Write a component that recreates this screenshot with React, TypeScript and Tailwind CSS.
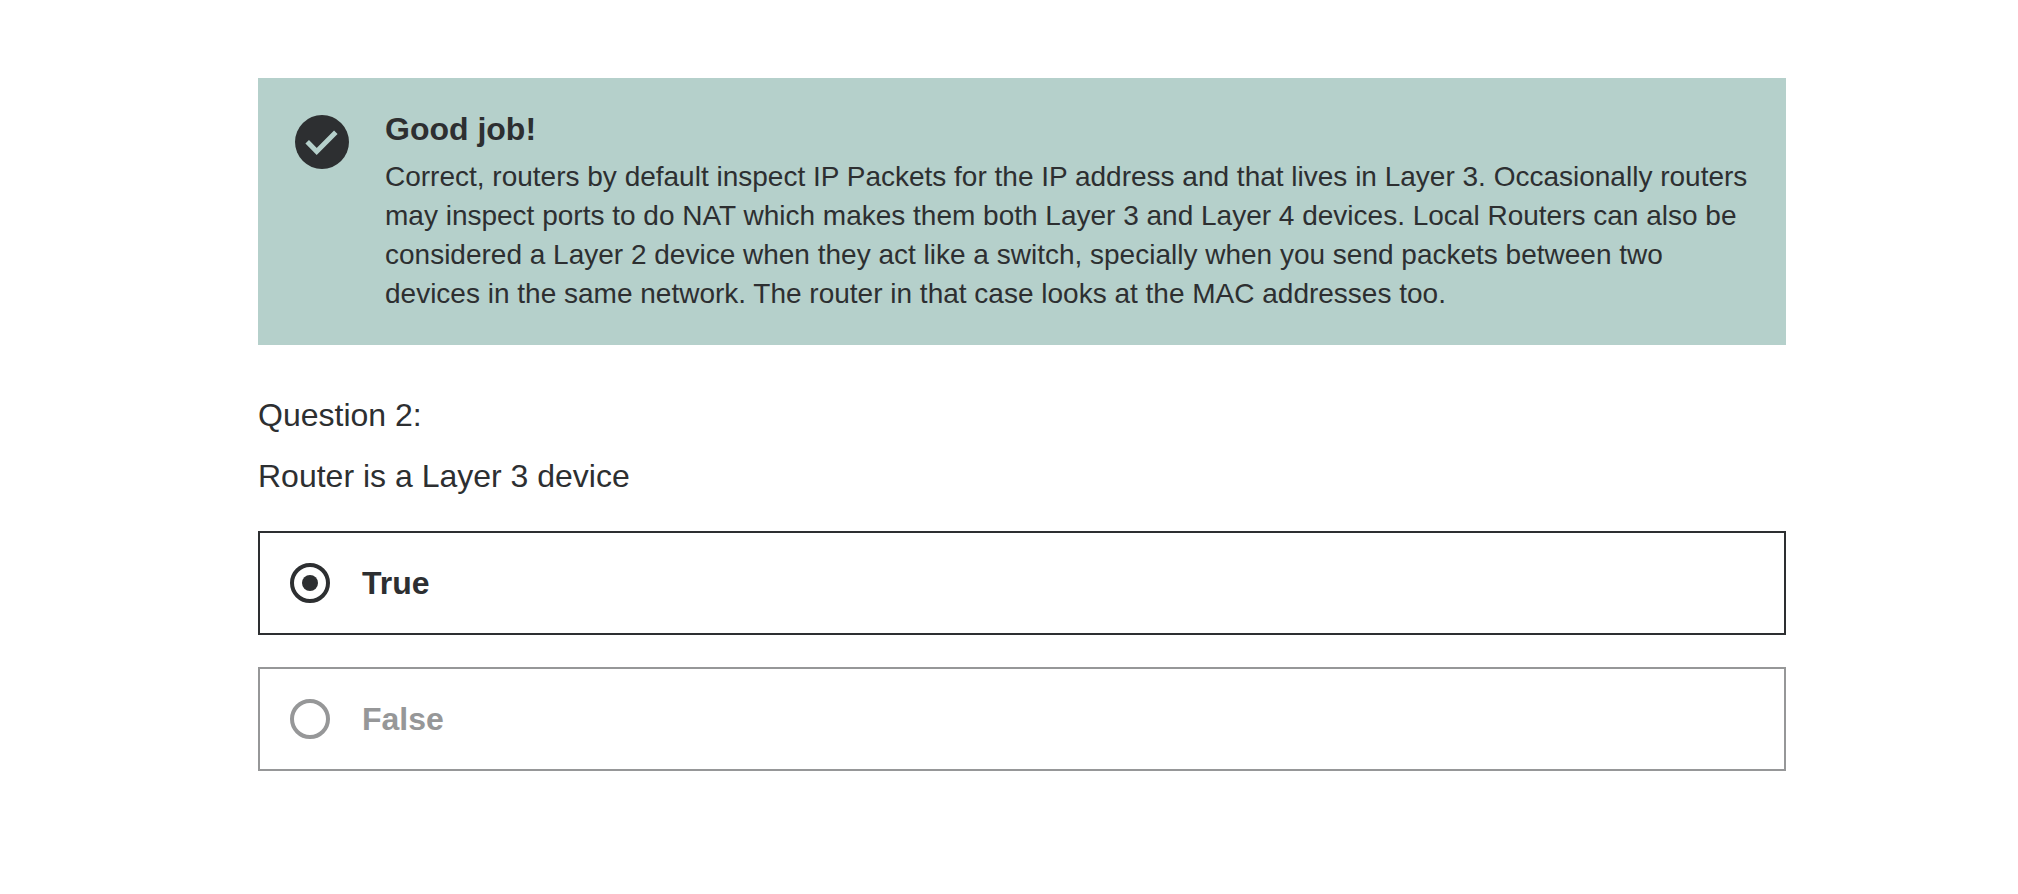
import { useState } from "react";

const OPTIONS = ["True", "False"];

function CheckCircle() {
  return (
    <svg viewBox="0 0 54 54" className="size-[54px] shrink-0" aria-hidden="true">
      <circle cx="27" cy="27" r="27" fill="#2d2f31" />
      <path d="M12.2 26.7 L21.7 36.4 L40.8 17.3" fill="none" stroke="#b5d0cb" strokeWidth="5" />
    </svg>
  );
}

export default function App() {
  const [answer, setAnswer] = useState("True");

  return (
    <main className="pt-[78px] pr-[232px] pb-12 pl-[258px] font-['Liberation_Sans',Arial,sans-serif] text-[#2d2f31]">
      <section role="status" className="flex gap-9 bg-[#b5d0cb] pt-[33px] pr-9 pb-8 pl-[37px]">
        <div className="pt-1">
          <CheckCircle />
        </div>
        <div className="flex flex-col gap-2.5">
          <h2 className="text-[32px] leading-9 font-bold">Good job!</h2>
          <p className="text-[28px] leading-[39px]">
            Correct, routers by default inspect IP Packets for the IP address and that lives in Layer 3. Occasionally
            routers may inspect ports to do NAT which makes them both Layer 3 and Layer 4 devices. Local Routers can
            also be considered a Layer 2 device when they act like a switch, specially when you send packets between two
            devices in the same network. The router in that case looks at the MAC addresses too.
          </p>
        </div>
      </section>

      <form>
        <p className="mt-12 mb-4 text-[32px] leading-[45px]">Question 2:</p>
        <fieldset>
          <legend className="text-[32px] leading-[45px]">Router is a Layer 3 device</legend>
          <div className="mt-8 flex flex-col gap-8">
            {OPTIONS.map((option) => (
              <label
                key={option}
                className="flex h-[104px] items-center gap-8 border-2 border-[#969798] px-[30px] text-[#969798] has-checked:border-[#2d2f31] has-checked:text-[#2d2f31]"
              >
                <input
                  type="radio"
                  name="answer"
                  value={option}
                  checked={answer === option}
                  onChange={() => setAnswer(option)}
                  className="grid size-10 shrink-0 appearance-none place-items-center rounded-full border-4 border-current before:size-4 before:rounded-full checked:before:bg-current"
                />
                <span className="text-[32px] leading-[45px] font-bold">{option}</span>
              </label>
            ))}
          </div>
        </fieldset>
      </form>
    </main>
  );
}
